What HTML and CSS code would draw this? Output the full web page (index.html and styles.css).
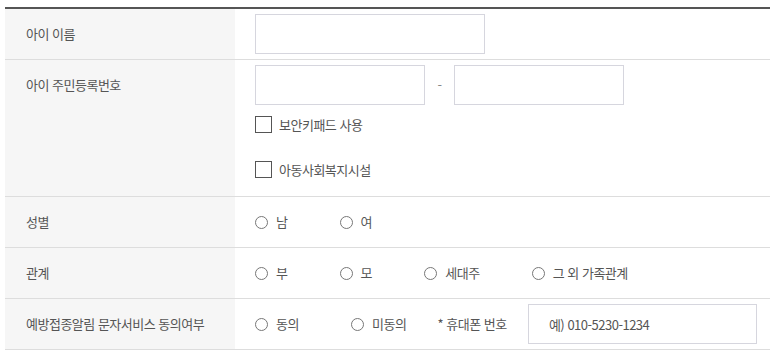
FILE: index.html
```html
<!DOCTYPE html>
<html lang="ko">
<head>
    <meta charset="UTF-8">
    <meta name="viewport" content="width=device-width, initial-scale=1.0">
    <title>아이 정보 입력</title>
    <link rel="stylesheet" href="styles.css">
</head>
<body>
    <table class="form-table">
        <tr>
            <th>아이 이름</th>
            <td><input type="text" class="input-name"></td>
        </tr>
        <tr>
            <th>아이 주민등록번호</th>
            <td>
                <div class="jumin">
                    <input type="text" class="input-jumin">
                    <span class="dash">-</span>
                    <input type="password" class="input-jumin">
                </div>
                <label class="check check-first"><span class="box"></span>보안키패드 사용</label>
                <label class="check check-second"><span class="box"></span>아동사회복지시설</label>
            </td>
        </tr>
        <tr>
            <th>성별</th>
            <td class="radios">
                <label class="radio"><span class="circle"></span>남</label>
                <label class="radio"><span class="circle"></span>여</label>
            </td>
        </tr>
        <tr>
            <th>관계</th>
            <td class="radios">
                <label class="radio"><span class="circle"></span>부</label>
                <label class="radio"><span class="circle"></span>모</label>
                <label class="radio"><span class="circle"></span>세대주</label>
                <label class="radio"><span class="circle"></span>그 외 가족관계</label>
            </td>
        </tr>
        <tr>
            <th>예방접종알림 문자서비스 동의여부</th>
            <td class="radios">
                <label class="radio"><span class="circle"></span>동의</label>
                <label class="radio radio-last"><span class="circle"></span>미동의</label>
                <span class="phone-label">* 휴대폰 번호</span>
                <input type="text" class="input-phone" placeholder="예) 010-5230-1234">
            </td>
        </tr>
    </table>
</body>
</html>
```

FILE: styles.css
```css
body {
    margin: 0;
    padding: 7px 0 0 5px;
    background: #fff;
    font-family: "Noto Sans CJK KR", "Noto Sans", sans-serif;
    font-size: 13px;
    color: #555;
    letter-spacing: -0.5px;
    overflow: hidden;
}
.form-table {
    width: 790px;
    border-collapse: collapse;
    border-top: 2px solid #555;
}
.form-table th,
.form-table td {
    border-bottom: 1px solid #ddd;
    vertical-align: top;
    text-align: left;
}
.form-table th {
    width: 230px;
    box-sizing: border-box;
    padding: 5px 0 5px 21px;
    background: #f6f6f6;
    font-weight: normal;
    line-height: 40px;
    color: #555;
}
.form-table td {
    padding: 5px 0 5px 20px;
    line-height: 40px;
}
input {
    height: 40px;
    box-sizing: border-box;
    border: 1px solid #d6d6de;
    border-radius: 0;
    padding: 0 20px;
    font-family: inherit;
    font-size: 13px;
    letter-spacing: -0.5px;
    color: #555;
    vertical-align: top;
}
input::placeholder {
    color: #555;
}
.input-name {
    width: 230px;
}
.jumin {
    display: flex;
    align-items: center;
}
.input-jumin {
    width: 170px;
}
.dash {
    width: 29px;
    text-align: center;
    color: #888;
}
.check {
    display: flex;
    align-items: center;
    gap: 7px;
    line-height: 17px;
}
.check-first {
    margin-top: 11px;
}
.check-second {
    margin-top: 28px;
    margin-bottom: 13px;
}
.box {
    width: 17px;
    height: 17px;
    box-sizing: border-box;
    border: 1px solid #555;
    background: #fff;
}
.radios {
    white-space: nowrap;
}
.radio {
    display: inline-flex;
    align-items: center;
    gap: 8px;
    margin-right: 49px;
    vertical-align: top;
    height: 40px;
}
.radio-last {
    margin-right: 28px;
}
.circle {
    width: 13px;
    height: 13px;
    box-sizing: border-box;
    border: 1px solid #777;
    border-radius: 50%;
    background: #fff;
}
.phone-label {
    display: inline-block;
    margin-right: 18px;
    vertical-align: top;
}
.input-phone {
    width: 229px;
}
```
